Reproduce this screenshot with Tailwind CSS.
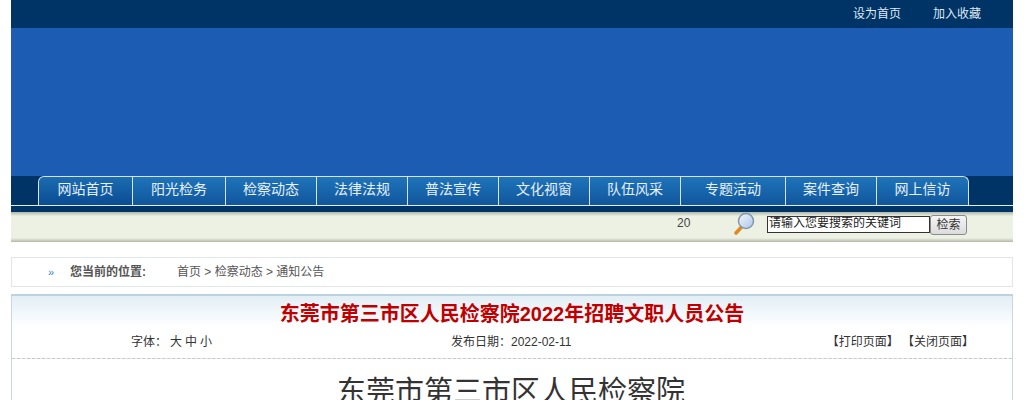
<!DOCTYPE html>
<html lang="zh-CN">
<head>
  <meta charset="UTF-8" />
  <title>通知公告</title>
  <script src="https://cdn.jsdelivr.net/npm/@tailwindcss/browser@4"></script>
</head>
<body class="bg-white h-[400px] overflow-hidden font-['Liberation_Sans','Noto_Sans_CJK_SC',sans-serif] text-xs text-[#333]">
  <div class="w-[1002px] ml-[11px]">

    <!-- Top bar -->
    <div class="h-7 bg-[#003366] flex justify-end items-center gap-8 pr-8 text-[#dfe8f2]">
      <a href="#">设为首页</a>
      <a href="#">加入收藏</a>
    </div>

    <!-- Banner -->
    <div class="h-[148px] bg-[#1c5cb3]"></div>

    <!-- Nav -->
    <div class="h-[36px] bg-[#003366]">
      <div class="h-[30px] pl-[27px] border-b border-[#e3edf5]">
        <div class="flex w-[931px] h-[29px] text-sm text-[#e8f1fa] border-t border-l border-r border-[#d5e4f1] rounded-t-md bg-gradient-to-b from-[#1f74ba] to-[#10569c]">
          <a href="#" class="w-[94px] pb-1 flex items-center justify-center border-r border-[#d5e4f1] bg-gradient-to-b from-[#1c6cb0] to-[#0a4c94] rounded-tl-md">网站首页</a>
          <a href="#" class="w-[93px] pb-1 flex items-center justify-center border-r border-[#d5e4f1]">阳光检务</a>
          <a href="#" class="w-[91px] pb-1 flex items-center justify-center border-r border-[#d5e4f1]">检察动态</a>
          <a href="#" class="w-[91px] pb-1 flex items-center justify-center border-r border-[#d5e4f1]">法律法规</a>
          <a href="#" class="w-[91px] pb-1 flex items-center justify-center border-r border-[#d5e4f1]">普法宣传</a>
          <a href="#" class="w-[91px] pb-1 flex items-center justify-center border-r border-[#d5e4f1]">文化视窗</a>
          <a href="#" class="w-[91px] pb-1 flex items-center justify-center border-r border-[#d5e4f1]">队伍风采</a>
          <a href="#" class="w-[105px] pb-1 flex items-center justify-center border-r border-[#d5e4f1]">专题活动</a>
          <a href="#" class="w-[91px] pb-1 flex items-center justify-center border-r border-[#d5e4f1]">案件查询</a>
          <a href="#" class="flex-1 pb-1 flex items-center justify-center">网上信访</a>
        </div>
      </div>
    </div>

    <!-- Search strip -->
    <div class="h-[30px] flex items-start pt-[3px] bg-gradient-to-b from-[#aeb8ac] via-[#edf1e4] via-[14%] to-[#edf1e4] relative">
      <span class="ml-[666px] w-[56px] text-[#444]">20</span>
      <svg class="w-6 h-6 -mt-[3px] shrink-0" viewBox="0 0 24 24">
        <defs>
          <linearGradient id="lens" x1="0" y1="0" x2="1" y2="1">
            <stop offset="0" stop-color="#f4f8fc" />
            <stop offset="1" stop-color="#a9c6e6" />
          </linearGradient>
        </defs>
        <line x1="3" y1="21" x2="8.5" y2="15" stroke="#e08a22" stroke-width="3.6" stroke-linecap="round" />
        <circle cx="13" cy="9" r="7.5" fill="url(#lens)" stroke="#8298ae" stroke-width="1.5" />
      </svg>
      <div class="ml-[10px] w-[163px] h-[17px] mt-[1px] bg-white border border-[#333] overflow-hidden">
        <input type="text" value="请输入您要搜索的关键词" class="block w-full h-[15px] -mt-[2px] px-[1px] text-xs text-[#222]" />
      </div>
      <button type="button" class="w-[37px] h-5 rounded-[3px] border border-[#8a8a8a] bg-gradient-to-b from-[#f5f5f5] to-[#dcdcdc] text-xs text-[#333]">检索</button>
      <div class="absolute left-0 right-0 bottom-0 h-[4px] bg-gradient-to-b from-[#edf1e4] to-[#b4b8a8]"></div>
    </div>

    <!-- Breadcrumb -->
    <div class="h-[30px] mt-[15px] border border-[#e3e6e8] flex items-center text-[#555]">
      <span class="ml-[36px] w-[22px] text-[11px] text-[#2f86c0]">»</span>
      <b class="w-[107px] text-[#555]">您当前的位置:</b>
      <span>首页 &gt; 检察动态 &gt; 通知公告</span>
    </div>

    <!-- Article -->
    <div class="mt-[7px] border border-[#cfd6da] border-t-[2px] border-t-[#bdd2df]">
      <div class="h-[63px] bg-gradient-to-b from-[#e2eef5] to-white to-50% border-b border-dashed border-[#c8c8c8]">
        <h1 class="text-xl font-bold text-[#c00000] text-center pt-[3px] leading-[30px]">东莞市第三市区人民检察院2022年招聘文职人员公告</h1>
        <div class="relative h-5 mt-[5px] text-[#333]">
          <span class="absolute left-[119px] top-0">字体：<span class="ml-[3px] tracking-[3px]">大中小</span></span>
          <span class="absolute left-[439px] top-0">发布日期：2022-02-11</span>
          <span class="absolute right-[38px] top-0">【打印页面】 【关闭页面】</span>
        </div>
      </div>
      <h2 class="text-[29px] text-[#333] text-center pt-[11px] pr-[2px] leading-[44px]">东莞市第三市区人民检察院</h2>
    </div>
  </div>
</body>
</html>
